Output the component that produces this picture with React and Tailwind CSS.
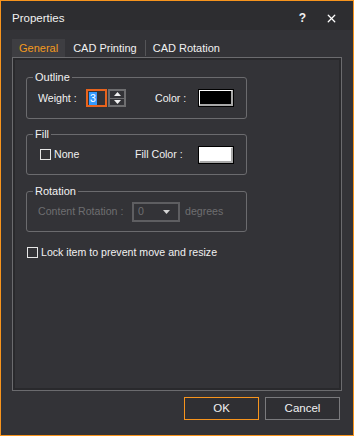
import { X } from 'lucide-react';

function GroupBox({ label, className = '', children }) {
  return (
    <div className={`relative w-[221px] border border-[#6b6b6e] rounded-[3px] flex items-center pl-[11px] ${className}`}>
      <span className="absolute -top-[8px] left-[6px] px-[2px] bg-[#333337] text-[11px] leading-[14px] text-[#f1f1f1]">
        {label}
      </span>
      {children}
    </div>
  );
}

function CheckBox({ label, className = '' }) {
  return (
    <label className={`flex items-center ${className}`}>
      <span className="w-[11px] h-[11px] border border-[#e6e6e6] mr-[3px]" />
      <span>{label}</span>
    </label>
  );
}

function Swatch({ fill }) {
  return (
    <div className="w-[36px] h-[18px] border border-black">
      <div className={`w-full h-full border border-t-white border-l-white border-r-[#a8a8a8] border-b-[#a8a8a8] border-r-2 border-b-2 ${fill}`} />
    </div>
  );
}

export default function App() {
  return (
    <div className="w-[354px] h-[436px] border border-[#f7941d] bg-[#333337] flex flex-col text-[#f1f1f1] font-['Liberation_Sans',Arial,sans-serif] text-[10.6px] leading-[13px]">
      {/* Title bar */}
      <div className="h-[29px] shrink-0 bg-[#2d2d30] flex items-center pl-[11px] pr-[15px] pt-[5px]">
        <span className="flex-1 text-[11.5px]">Properties</span>
        <span className="font-bold text-[12px] mr-[19px]">?</span>
        <X size={13} strokeWidth={2.4} className="text-white" />
      </div>

      <div className="flex-1 flex flex-col px-[11px] pt-[9px]">
        {/* Tabs */}
        <div className="h-[18px] flex items-stretch text-[11px]">
          <div className="bg-[#3e3e42] px-[7px] flex items-center text-[#f39a1e]">General</div>
          <div className="px-[8px] flex items-center border-r border-[#555558] my-[1px]">CAD Printing</div>
          <div className="px-[7px] flex items-center">CAD Rotation</div>
        </div>

        {/* Panel */}
        <div className="h-[334px] border border-[#6b6b6e] shadow-[inset_0_0_0_2px_#29292c] pl-[13px] flex flex-col">
          <GroupBox label="Outline" className="mt-[19px] h-[42px]">
            <span className="w-[48px]">Weight :</span>
            <div className="w-[21px] h-[18px] border-2 border-[#e8631d] flex items-center pl-[1px]">
              <span className="bg-[#3399ff] text-white px-[1px] leading-[13px]">3</span>
            </div>
            <div className="ml-[1px] w-[18px] h-[18px] border-2 border-[#6e6e70] flex flex-col">
              <div className="flex-1 flex items-center justify-center border-b border-[#6e6e70]">
                <svg width="7" height="4" viewBox="0 0 7 4"><path d="M0 4L3.5 0L7 4Z" fill="#f1f1f1" /></svg>
              </div>
              <div className="flex-1 flex items-center justify-center">
                <svg width="7" height="4" viewBox="0 0 7 4"><path d="M0 0L3.5 4L7 0Z" fill="#f1f1f1" /></svg>
              </div>
            </div>
            <span className="ml-[29px] w-[43px]">Color :</span>
            <Swatch fill="bg-black" />
          </GroupBox>

          <GroupBox label="Fill" className="mt-[15px] h-[41px]">
            <CheckBox label="None" className="ml-[2px] w-[95px]" />
            <span className="w-[63px]">Fill Color :</span>
            <Swatch fill="bg-white" />
          </GroupBox>

          <GroupBox label="Rotation" className="mt-[16px] h-[41px]">
            <span className="w-[94px] text-[#6e6e70]">Content Rotation :</span>
            <div className="w-[48px] h-[20px] border-2 border-[#5e5e61] flex items-center pl-[4px] pr-[8px] text-[#6e6e70]">
              <span className="flex-1">0</span>
              <svg width="7" height="4" viewBox="0 0 7 4"><path d="M0 0L3.5 4L7 0Z" fill="#d4d4d4" /></svg>
            </div>
            <span className="ml-[5px] text-[#6e6e70]">degrees</span>
          </GroupBox>

          <CheckBox label="Lock item to prevent move and resize" className="mt-[14px] ml-[1px]" />
        </div>

        {/* Buttons */}
        <div className="mt-[6px] flex justify-end gap-[6px] pr-[2px] text-[11.5px]">
          <button className="w-[75px] h-[23px] border border-[#f7941d] bg-[#2f2f33] text-[#f1f1f1]">OK</button>
          <button className="w-[75px] h-[23px] border border-[#7a7a7d] bg-[#2f2f33] text-[#f1f1f1]">Cancel</button>
        </div>
      </div>
    </div>
  );
}
